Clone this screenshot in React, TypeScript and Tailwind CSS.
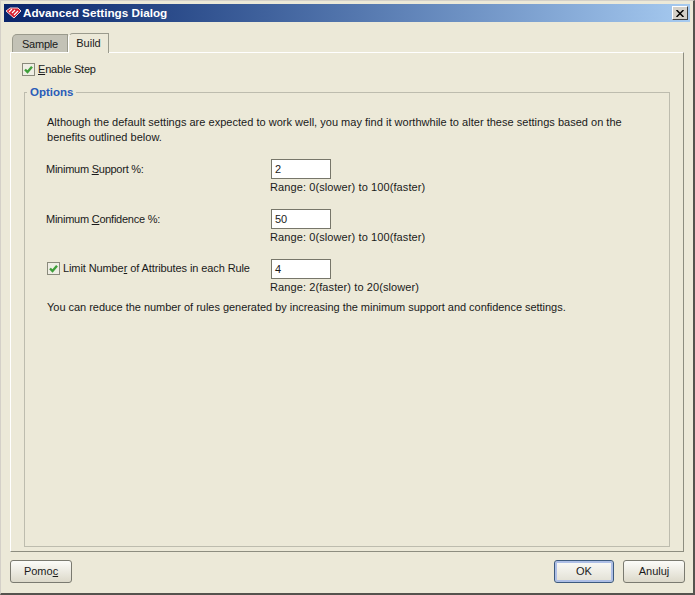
import React from "react";

const Check = () => (
  <svg width="9" height="9" viewBox="0 0 9 9" fill="none">
    <path d="M1 4.5 L3.5 7 L8 1.8" stroke="#3f9f3a" strokeWidth="2.4" />
  </svg>
);

const CheckBox = () => (
  <span className="flex h-[13px] w-[13px] shrink-0 items-center justify-center border border-[#8a8a7c] bg-[#efeee4]">
    <Check />
  </span>
);

const Field = ({ value, range }: { value: string; range: string }) => (
  <div className="flex w-[200px] flex-col">
    <div className="ml-px flex h-[20px] w-[60px] items-center border border-[#77766a] bg-white pl-[3px] pt-px">
      {value}
    </div>
    <div className="mt-[1px] leading-[14px] tracking-[0.1px]">{range}</div>
  </div>
);

const DialogButton = ({
  children,
  primary,
}: {
  children: React.ReactNode;
  primary?: boolean;
}) => (
  <button
    className={
      primary
        ? "h-[23px] w-[60px] rounded-[3px] border border-[#3c5a7e] bg-gradient-to-b from-[#fbfbf8] to-[#e2e0d4] shadow-[inset_0_0_0_2px_#aebfe6]"
        : "h-[23px] w-[62px] rounded-[3px] border border-[#7a7a70] bg-gradient-to-b from-[#fcfcf9] to-[#dcd9ca]"
    }
  >
    {children}
  </button>
);

export default function App() {
  return (
    <div className="flex h-[595px] w-[695px] flex-col border-t border-l border-[#d4d0c8] border-r-2 border-b-2 border-r-[#55534e] border-b-[#55534e] bg-[#ece9d8] font-['Liberation_Sans',sans-serif] text-[11px] text-[#1a1a1a]">
      {/* title bar */}
      <div className="mx-[3px] mt-[3px] flex h-[18px] shrink-0 items-center bg-gradient-to-r from-[#0a246a] to-[#a6caf0] pl-[1px] pr-[2px]">
        <svg width="17" height="12" viewBox="0 0 17 12">
          <path d="M1 4 L5 1 H13 L16 4 L9 11 Z" fill="#d81f30" stroke="#f4d8dc" strokeWidth="1" />
          <path d="M4 5 L7 2 M7 6 L10 3 M9 8 L13 4" stroke="#fff" strokeWidth="1.2" />
        </svg>
        <span className="ml-px text-[11.7px] font-bold text-white">Advanced Settings Dialog</span>
        <span className="ml-auto flex h-[14px] w-[16px] items-center justify-center border border-b-[#404040] border-r-[#404040] border-t-white border-l-white bg-[#d4d0c8]">
          <svg width="8" height="7" viewBox="0 0 8 7">
            <path d="M0.5 0 L7.5 7 M7.5 0 L0.5 7" stroke="#000" strokeWidth="1.5" />
          </svg>
        </span>
      </div>

      <div className="mx-[9px] mt-[11px] flex min-h-0 flex-1 flex-col">
        {/* tabs */}
        <div className="flex h-[19px] shrink-0 items-end pl-[2px]">
          <div className="flex h-[18px] w-[56px] items-center justify-center rounded-tl-[5px] border border-b-0 border-[#9a9a8c] bg-[#c3c2b6] pt-px tracking-[-0.2px]">
            Sample
          </div>
          <div className="z-10 -mb-px flex h-[20px] w-[41px] items-center justify-center rounded-tl-[5px] border border-b-0 border-t-[#9a9a8c] border-l-white border-r-[#9a9a8c] bg-[#ece9d8]">
            Build
          </div>
        </div>

        {/* tab panel */}
        <div className="flex min-h-0 flex-1 flex-col border border-t-white border-l-white border-b-[#8d8d80] border-r-[#8d8d80] px-[13px] pb-[4px]">
          <label className="-ml-[2px] mt-[9px] flex h-[15px] shrink-0 items-center gap-[3px]">
            <CheckBox />
            <span className="tracking-[-0.2px]">
              <u>E</u>nable Step
            </span>
          </label>

          <fieldset className="mt-[8px] flex min-h-0 flex-1 flex-col border border-[#bdbcae] pl-[21px] pr-[24px]">
            <legend className="-ml-[19px] px-[3px] text-[11.5px] font-bold leading-[15px] text-[#2a5cb8]">
              Options
            </legend>
            <p className="ml-px mt-[15px] w-[590px] leading-[15px] tracking-[0.02px]">
              Although the default settings are expected to work well, you may find it worthwhile to alter these settings based on the benefits outlined below.
            </p>

            <div className="mt-[14px] flex flex-col gap-[15px]">
              <div className="flex">
                <div className="w-[224px] pt-[2px] tracking-[-0.25px]">
                  Minimum <u>S</u>upport %:
                </div>
                <Field value="2" range="Range: 0(slower) to 100(faster)" />
              </div>
              <div className="flex">
                <div className="w-[224px] pt-[2px] tracking-[-0.25px]">
                  Minimum <u>C</u>onfidence %:
                </div>
                <Field value="50" range="Range: 0(slower) to 100(faster)" />
              </div>
              <div className="flex">
                <label className="ml-px flex h-[16px] w-[223px] items-center gap-[3px] pt-[2px]">
                  <CheckBox />
                  <span className="tracking-[-0.1px]">
                    Limit Numbe<u>r</u> of Attributes in each Rule
                  </span>
                </label>
                <Field value="4" range="Range: 2(faster) to 20(slower)" />
              </div>
            </div>

            <p className="ml-px mt-[5px] tracking-[-0.03px]">
              You can reduce the number of rules generated by increasing the minimum support and confidence settings.
            </p>
          </fieldset>
        </div>

        {/* footer */}
        <div className="flex h-[41px] shrink-0 items-start pt-[8px]">
          <DialogButton>
            Pomo<u>c</u>
          </DialogButton>
          <div className="-mr-px ml-auto flex gap-[9px]">
            <DialogButton primary>OK</DialogButton>
            <DialogButton>Anuluj</DialogButton>
          </div>
        </div>
      </div>
    </div>
  );
}
